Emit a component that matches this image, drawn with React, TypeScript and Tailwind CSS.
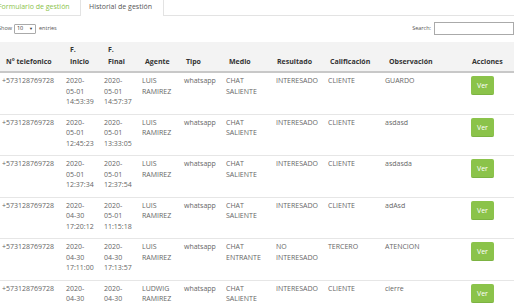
import React from 'react'

// historial de gestion - tabla de registros

type Row = {
  tel: string
  inicio: string[]
  fin: string[]
  agente: string[]
  tipo: string
  medio: string[]
  resultado: string[]
  calificacion: string
  obs: string
}

const rows: Row[] = [
  { tel: '+573128769728', inicio: ['2020-', '05-01', '14:53:39'], fin: ['2020-', '05-01', '14:57:37'], agente: ['LUIS', 'RAMIREZ'], tipo: 'whatsapp', medio: ['CHAT', 'SALIENTE'], resultado: ['INTERESADO'], calificacion: 'CLIENTE', obs: 'GUARDO' },
  { tel: '+573128769728', inicio: ['2020-', '05-01', '12:45:23'], fin: ['2020-', '05-01', '13:33:05'], agente: ['LUIS', 'RAMIREZ'], tipo: 'whatsapp', medio: ['CHAT', 'SALIENTE'], resultado: ['INTERESADO'], calificacion: 'CLIENTE', obs: 'asdasd' },
  { tel: '+573128769728', inicio: ['2020-', '05-01', '12:37:34'], fin: ['2020-', '05-01', '12:37:54'], agente: ['LUIS', 'RAMIREZ'], tipo: 'whatsapp', medio: ['CHAT', 'SALIENTE'], resultado: ['INTERESADO'], calificacion: 'CLIENTE', obs: 'asdasda' },
  { tel: '+573128769728', inicio: ['2020-', '04-30', '17:20:12'], fin: ['2020-', '05-01', '11:15:18'], agente: ['LUIS', 'RAMIREZ'], tipo: 'whatsapp', medio: ['CHAT', 'SALIENTE'], resultado: ['INTERESADO'], calificacion: 'CLIENTE', obs: 'adAsd' },
  { tel: '+573128769728', inicio: ['2020-', '04-30', '17:11:00'], fin: ['2020-', '04-30', '17:13:57'], agente: ['LUIS', 'RAMIREZ'], tipo: 'whatsapp', medio: ['CHAT', 'ENTRANTE'], resultado: ['NO', 'INTERESADO'], calificacion: 'TERCERO', obs: 'ATENCION' },
  { tel: '+573128769728', inicio: ['2020-', '04-30', '17:01:26'], fin: ['2020-', '04-30', '17:03:11'], agente: ['LUDWIG', 'RAMIREZ'], tipo: 'whatsapp', medio: ['CHAT', 'SALIENTE'], resultado: ['INTERESADO'], calificacion: 'CLIENTE', obs: 'cierre' },
]

function Lines({ items }: { items: string[] }) {
  return (
    <>
      {items.map((t, i) => (
        <div key={i} className="whitespace-nowrap">{t}</div>
      ))}
    </>
  )
}

const th = 'align-bottom text-left font-bold pt-[2px] pb-[3px] leading-[12px]'
const td = 'align-top pt-[3px] pb-[6px] pl-[2px] leading-[10.5px]'

export default function App() {
  return (
    <div className="w-[514px] h-[304px] overflow-hidden bg-white text-[#666] font-['Open_Sans',sans-serif] text-[7px]">
      {/* tabs */}
      <div className="flex h-[16px] border-b border-[#e3e3e3] text-[7px]">
        <div className="ml-[-2px] w-[82px] pt-[2px] text-[#8bc34a]">Formulario de gestión</div>
        <div className="w-[84px] h-[16px] border-x border-[#e3e3e3] bg-white pl-[8px] pt-[2px] text-[#555]">
          Historial de gestión
        </div>
      </div>

      {/* controles */}
      <div className="flex items-center justify-between h-[25px] text-[5.5px] text-[#555]">
        <div className="flex items-center ml-[-2px]">
          <span>Show</span>
          <div className="ml-[2px] w-[22px] h-[10px] border border-[#aaa] rounded-[1px] flex items-center justify-between px-[2px] text-[#333]">
            <span>10</span>
            <span className="text-[4px]">▼</span>
          </div>
          <span className="ml-[3px]">entries</span>
        </div>
        <div className="flex items-center">
          <span>Search:</span>
          <div className="ml-[3px] w-[80px] h-[13px] border border-[#aaa] bg-white" />
        </div>
      </div>

      {/* tabla */}
      <table className="table-fixed border-collapse w-[514px] mt-[1px]">
        <colgroup>
          <col className="w-[64px]" />
          <col className="w-[38px]" />
          <col className="w-[38px]" />
          <col className="w-[42px]" />
          <col className="w-[42px]" />
          <col className="w-[50px]" />
          <col className="w-[52px]" />
          <col className="w-[57px]" />
          <col className="w-[72px]" />
          <col className="w-[59px]" />
        </colgroup>
        <thead>
          <tr className="bg-[#f3f3f3] text-[#333] border-b-2 border-[#c8c8c8]">
            <th className={th + ' pl-[6px]'}>N° telefonico</th>
            <th className={th + ' pl-[6px]'}>F.<br />Inicio</th>
            <th className={th + ' pl-[6px]'}>F.<br />Final</th>
            <th className={th + ' pl-[5px]'}>Agente</th>
            <th className={th + ' pl-[4px]'}>Tipo</th>
            <th className={th + ' pl-[5px]'}>Medio</th>
            <th className={th + ' pl-[3px]'}>Resultado</th>
            <th className={th + ' pl-[4px]'}>Calificación</th>
            <th className={th + ' pl-[6px]'}>Observación</th>
            <th className={th + ' pl-[17px]'}>Acciones</th>
          </tr>
        </thead>
        <tbody>
          {rows.map((r, i) => (
            <tr key={i} className={i > 0 ? 'border-t border-[#e6e6e6]' : ''}>
              <td className={td}>{r.tel}</td>
              <td className={td}><Lines items={r.inicio} /></td>
              <td className={td}><Lines items={r.fin} /></td>
              <td className={td}><Lines items={r.agente} /></td>
              <td className={td}>{r.tipo}</td>
              <td className={td}><Lines items={r.medio} /></td>
              <td className={td}><Lines items={r.resultado} /></td>
              <td className={td}>{r.calificacion}</td>
              <td className={td}>{r.obs}</td>
              <td className="align-top pt-[3px] pl-[16px]">
                <button className="w-[23px] h-[19px] rounded-[2px] bg-[#8bc34a] text-white text-[7px] leading-[19px] border-b border-[#7cb342]">
                  Ver
                </button>
              </td>
            </tr>
          ))}
        </tbody>
      </table>
    </div>
  )
}
